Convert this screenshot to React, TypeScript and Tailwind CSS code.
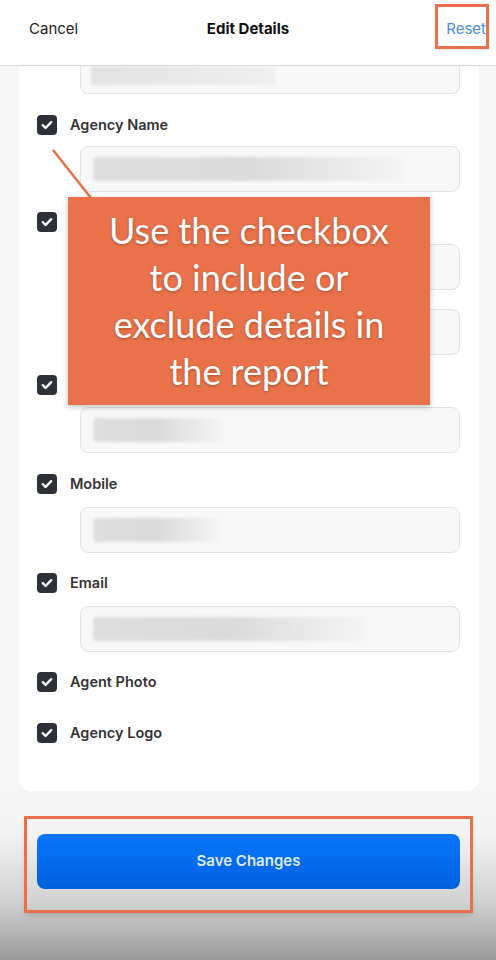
import React from 'react'

const ui = { fontFamily: 'Inter, "Open Sans", sans-serif' }

function Check() {
  return (
    <span className="flex h-[20px] w-[20px] shrink-0 items-center justify-center rounded-[4px] bg-[#2e3238]">
      <svg width="14" height="14" viewBox="0 0 14 14" fill="none">
        <path d="M2.8 7.2l2.8 2.8 5.6-5.8" stroke="#fff" strokeWidth="2.4" strokeLinecap="round" strokeLinejoin="round" />
      </svg>
    </span>
  )
}

// blurred value inside an input box
function Field({ bar, className = '' }: { bar: string; className?: string }) {
  return (
    <div className={`ml-[61px] mr-[19px] flex h-[46px] items-center rounded-lg border border-[#e3e3e3] bg-[#f8f8f8] px-[12px] ${className}`}>
      <div className={`h-[24px] rounded-sm bg-gradient-to-r from-[#dedede] via-[#dadada] to-[#f4f4f4] blur-[1.5px] ${bar}`} />
    </div>
  )
}

function Row({ label, children, className = 'mt-[20px]' }: { label?: string; children?: React.ReactNode; className?: string }) {
  return (
    <div className={className}>
      <div className="flex h-[20px] items-center gap-[13px] pl-[18px]">
        <Check />
        {label && <span className="text-[14.5px] font-semibold text-[#333]">{label}</span>}
      </div>
      {children}
    </div>
  )
}

export default function App() {
  return (
    <div className="relative flex h-[960px] w-[496px] flex-col overflow-hidden bg-[#f6f6f6]" style={ui}>
      <header className="relative flex h-[66px] shrink-0 items-center justify-between border-b border-[#d6d6d6] bg-white pb-[7px] pl-[29px] pr-[10px]">
        <span className="text-[15px] text-[#222]">Cancel</span>
        <span className="absolute left-1/2 top-[18px] -translate-x-1/2 text-[15px] font-bold text-[#111]">Edit Details</span>
        <span className="text-[15px] text-[#4a8fe2]">Reset</span>
        <div className="absolute left-[435px] top-[4px] h-[45px] w-[54px] border-[3px] border-[#e8714a] shadow-sm" />
      </header>

      <div className="ml-[19px] w-[460px] shrink-0 rounded-b-xl bg-white pb-[48px]">
        {/* list is scrolled, top field partly hidden */}
        <div className="ml-[61px] mr-[19px] flex h-[28px] items-start rounded-b-lg border border-t-0 border-[#e3e3e3] bg-[#f8f8f8] px-[10px]">
          <div className="h-[19px] w-[184px] bg-gradient-to-r from-[#e2e2e2] to-[#efefef] blur-[1.5px]" />
        </div>

        <div>
          <Row label="Agency Name" className="mt-[21px]">
            <Field bar="w-[310px]" className="mt-[11px]" />
          </Row>
          {/* rows under the callout: their labels are covered */}
          <Row>
            <Field bar="w-[220px]" className="mt-[12px]" />
            <Field bar="w-[150px]" className="mt-[19px]" />
          </Row>
          <Row>
            <Field bar="w-[130px]" className="mt-[12px]" />
          </Row>
          <Row label="Mobile" className="mt-[21px]">
            <Field bar="w-[126px]" className="mt-[13px]" />
          </Row>
          <Row label="Email">
            <Field bar="w-[272px]" className="mt-[13px]" />
          </Row>
          <Row label="Agent Photo" />
          <Row label="Agency Logo" className="mt-[31px]" />
        </div>
      </div>

      <footer className="flex-1 bg-[linear-gradient(to_bottom,#f6f6f6_0%,#f3f3f3_25%,#d2d2d2_65%,#999_100%)] pt-[25px]">
        <div className="mx-[24px] w-[449px] border-[3px] border-[#e8714a] px-[10px] pb-[21px] pt-[15px] shadow-md">
          <button className="flex h-[55px] w-full items-center justify-center rounded-lg bg-gradient-to-b from-[#0a76fd] to-[#0061de] text-[15px] font-semibold text-[#dfeafc]">
            Save Changes
          </button>
        </div>
      </footer>

      {/* callout */}
      <svg className="absolute left-0 top-0" width="120" height="210">
        <line x1="53" y1="150" x2="91" y2="198" stroke="#e8714a" strokeWidth="2.5" />
      </svg>
      <div
        className="absolute left-[68px] top-[197px] flex h-[208px] w-[362px] items-center justify-center bg-[#e9724a] text-center text-[36px] leading-[47px] text-white shadow-[0_2px_6px_rgba(0,0,0,0.25)] [text-shadow:0_1px_3px_rgba(0,0,0,0.3)]"
        style={{ fontFamily: 'Lato, "Open Sans", sans-serif' }}
      >
        <p>
          Use the checkbox
          <br />
          to include or
          <br />
          exclude details in
          <br />
          the report
        </p>
      </div>
    </div>
  )
}
